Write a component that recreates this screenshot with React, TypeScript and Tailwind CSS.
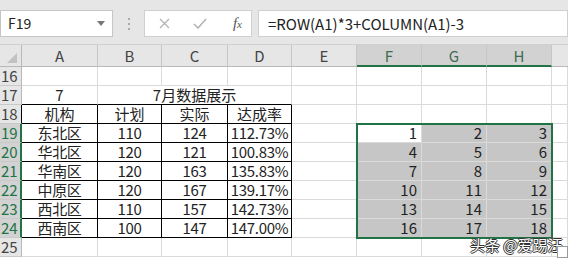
import React from 'react'

const cols = ['A', 'B', 'C', 'D', 'E', 'F', 'G', 'H']
const sel = ['F', 'G', 'H']

const data = [
  ['东北区', '110', '124', '112.73%'],
  ['华北区', '120', '121', '100.83%'],
  ['华南区', '120', '163', '135.83%'],
  ['中原区', '120', '167', '139.17%'],
  ['西北区', '110', '157', '142.73%'],
  ['西南区', '100', '147', '147.00%'],
]

const font = { fontFamily: '"Noto Sans CJK SC", "Liberation Sans", sans-serif' }

function Cell({ children, className = '' }: { children?: React.ReactNode; className?: string }) {
  return (
    <div className={`h-[19px] border-r border-b border-[#dadada] text-[15px] leading-[17px] text-[#222] whitespace-nowrap ${className}`}>
      {children}
    </div>
  )
}

function RowHead({ n }: { n: number }) {
  const on = n >= 19 && n <= 24
  const edge = n === 18 ? 'border-r-black' : on ? 'border-r-2 border-r-[#217346]' : 'border-r-[#b8b8b8]'
  return (
    <div
      className={`h-[19px] border-r border-b border-b-[#c9c9c9] text-[15px] leading-[17px] pl-[1px] ${edge} ${
        on ? 'bg-[#d2d2d2] text-[#217346]' : 'bg-[#e6e6e6] text-[#444]'
      }`}
    >
      {n}
    </div>
  )
}

export default function App() {
  const rows: React.ReactNode[] = []

  for (let r = 16; r <= 25; r++) {
    rows.push(<RowHead key={`h${r}`} n={r} />)
    const t = r - 19

    if (r === 17) {
      rows.push(<Cell key="a17" className="text-center border-b-black">7</Cell>)
      rows.push(<Cell key="b17" className="col-span-3 text-center border-b-black border-r-[#dadada]">7月数据展示</Cell>)
    } else if (r === 18) {
      ;['机构', '计划', '实际', '达成率'].forEach((s) =>
        rows.push(<Cell key={`t${s}`} className="text-center border-black">{s}</Cell>)
      )
    } else if (r >= 19 && r <= 24) {
      data[t].forEach((s, i) =>
        rows.push(
          <Cell key={`d${r}${i}`} className="text-center border-black tracking-[-0.3px]">
            {s}
          </Cell>
        )
      )
    } else {
      for (let i = 0; i < 4; i++) rows.push(<Cell key={`e${r}${i}`} />)
    }

    rows.push(<Cell key={`E${r}`} />)

    for (let c = 0; c < 3; c++) {
      const inSel = r >= 19 && r <= 24
      const v = inSel ? String(t * 3 + c + 1) : ''
      const gray = inSel && !(r === 19 && c === 0)
      rows.push(
        <Cell key={`s${r}${c}`} className={`text-right pr-[4px] ${gray ? 'bg-[#c6c6c6] border-[#b4b4b4]' : ''}`}>
          {v}
        </Cell>
      )
    }
    rows.push(<Cell key={`x${r}`} />)
  }

  return (
    <div className="w-[568px] h-[258px] bg-white overflow-hidden relative" style={font}>
      {/* formula bar */}
      <div className="h-[45px] bg-[#e6e6e6] flex items-start pt-[10px] border-b border-[#d0d0d0]">
        <div className="w-[113px] h-[27px] bg-white border border-[#c6c6c6] flex items-center justify-between pl-[7px] pr-[7px]">
          <span className="text-[14px] text-[#222]">F19</span>
          <svg width="8" height="5" viewBox="0 0 8 5">
            <path d="M0 0h8L4 5z" fill="#777" />
          </svg>
        </div>
        <div className="w-[31px] h-[27px] flex flex-col items-center justify-center gap-[3px]">
          <span className="w-[2px] h-[2px] bg-[#aaa]" />
          <span className="w-[2px] h-[2px] bg-[#aaa]" />
          <span className="w-[2px] h-[2px] bg-[#aaa]" />
        </div>
        <div className="w-[108px] h-[27px] bg-white border border-[#d0d0d0] flex items-center pl-[14px] pr-[9px]">
          <svg width="11" height="11" viewBox="0 0 11 11">
            <path d="M1 1l9 9M10 1l-9 9" stroke="#b4b4b4" strokeWidth="1.3" />
          </svg>
          <svg width="14" height="11" viewBox="0 0 14 11" className="ml-[23px]">
            <path d="M1 6l4 4 8-9" stroke="#b4b4b4" strokeWidth="1.6" fill="none" />
          </svg>
          <span className="ml-auto text-[15px] italic text-[#555]" style={{ fontFamily: '"Liberation Serif", serif' }}>
            f<span className="text-[11px]">x</span>
          </span>
        </div>
        <div className="flex-1 ml-[6px] h-[27px] bg-white border border-[#d0d0d0] pl-[9px] text-[15px] leading-[25px] text-[#222]">
          =ROW(A1)*3+COLUMN(A1)-3
        </div>
      </div>

      {/* sheet */}
      <div className="relative">
        <div className="grid grid-cols-[22px_76px_64px_66px_64px_65px_65px_65px_65px_16px]">
          <div className="h-[22px] bg-[#e6e6e6] border-r border-b border-[#b8b8b8] relative">
            <svg width="10" height="10" viewBox="0 0 10 10" className="absolute right-[4px] bottom-[3px]">
              <path d="M10 0v10H0z" fill="#c2c2c2" />
            </svg>
          </div>
          {cols.map((c) => {
            const on = sel.includes(c)
            return (
              <div
                key={c}
                className={`h-[22px] border-r border-[#c6c6c6] text-center text-[15px] leading-[22px] ${
                  on
                    ? 'bg-[#d2d2d2] text-[#3f6b52] border-b-2 border-b-[#217346]'
                    : 'bg-[#e6e6e6] text-[#444] border-b border-b-[#b8b8b8]'
                }`}
              >
                {c}
              </div>
            )
          })}
          <div className="h-[22px] bg-[#e6e6e6] border-b border-[#b8b8b8]" />
          {rows}
        </div>

        {/* selection outline */}
        <div className="absolute left-[356px] top-[78px] w-[197px] h-[116px] border-2 border-[#217346]" />
      </div>

      {/* watermark */}
      <div className="absolute left-[470px] top-[236px] whitespace-nowrap text-[15px] leading-[18px] text-white [text-shadow:-1px_0_#333,1px_0_#333,0_1px_#333,0_-1px_#333]">
        头条 @爱踢汪
      </div>
      <div className="absolute left-[557px] top-[246px] w-[11px] h-[12px] bg-white border border-[#999]" />
    </div>
  )
}
